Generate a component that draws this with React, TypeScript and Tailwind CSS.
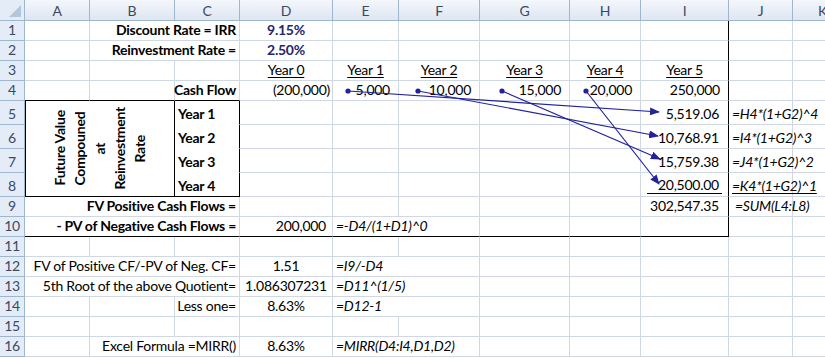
import type { ReactNode } from "react";

const cols = ["A", "B", "C", "D", "E", "F", "G", "H", "I", "J", "K"];

type Edge = "g" | "k" | "w";

const rightEdge: Record<Edge, string> = {
  g: "border-r-[#d0d7e5]",
  k: "border-r-black",
  w: "border-r-white",
};
const bottomEdge: Record<Edge, string> = {
  g: "border-b-[#d0d7e5]",
  k: "border-b-black",
  w: "border-b-white",
};

function Cell({
  r = "g",
  b = "g",
  className = "",
  children,
}: {
  r?: Edge;
  b?: Edge;
  className?: string;
  children?: ReactNode;
}) {
  return (
    <div
      className={`flex items-end whitespace-nowrap border-r border-b px-[3px] pb-[1px] leading-[18px] ${rightEdge[r]} ${bottomEdge[b]} ${className}`}
    >
      {children}
    </div>
  );
}

function RowNum({ n }: { n: number }) {
  return (
    <div className="flex items-end justify-center border-r border-b border-[#9eb6ce] bg-[#e4ecf7] pb-[1px] leading-[18px] text-[#3b4a63]">
      {n}
    </div>
  );
}

// run of empty cells; lastI puts the black right edge of column I on the last one
function Blank({ count, lastI = false }: { count: number; lastI?: boolean }) {
  return (
    <>
      {Array.from({ length: count }).map((_, i) => (
        <Cell key={i} r={lastI && i === count - 1 ? "k" : "g"} />
      ))}
    </>
  );
}

const num = "justify-end pr-[8px]";
const fv = "justify-end pr-[9px]";
const formula = "italic pl-[3px]";

function Arrows() {
  const lines = [
    { x1: 348, y1: 91, x2: 659, y2: 112 },
    { x1: 418, y1: 91, x2: 658, y2: 136 },
    { x1: 502, y1: 91, x2: 660, y2: 159 },
    { x1: 586, y1: 91, x2: 659, y2: 184 },
  ];
  return (
    <svg
      className="pointer-events-none absolute left-0 top-0"
      width={825}
      height={358}
      viewBox="0 0 825 358"
    >
      <defs>
        <marker
          id="head"
          markerWidth="10"
          markerHeight="8"
          refX="9"
          refY="4"
          orient="auto"
          markerUnits="userSpaceOnUse"
        >
          <path d="M0 0 L10 4 L0 8 Z" fill="#22229a" />
        </marker>
      </defs>
      {lines.map((l, i) => (
        <g key={i}>
          <line
            x1={l.x1}
            y1={l.y1}
            x2={l.x2}
            y2={l.y2}
            stroke="#22229a"
            strokeWidth="1.2"
            markerEnd="url(#head)"
          />
          <circle cx={l.x1} cy={l.y1} r="2.6" fill="#22229a" />
        </g>
      ))}
    </svg>
  );
}

export default function App() {
  return (
    <div className="relative h-[358px] w-[825px] overflow-hidden bg-white font-['Lato',sans-serif] text-[14px] tracking-[-0.25px] text-black">
      <div className="grid grid-cols-[25px_65px_85px_65px_93px_66px_81px_90px_71px_88px_64px_60px] grid-rows-[21px_20px_20px_20px_20px_24px_24px_24px_24px_20px_20px_20px_20px_20px_20px_20px_20px]">
        {/* header row */}
        <div className="relative border-r border-b border-[#9eb6ce] bg-[#e4ecf7]">
          <div className="absolute bottom-[3px] right-[3px] h-0 w-0 border-l-[12px] border-b-[12px] border-l-transparent border-b-[#b4c6dc]" />
        </div>
        {cols.map((c) => (
          <div
            key={c}
            className="flex items-center justify-center border-r border-b border-[#9eb6ce] bg-gradient-to-b from-[#f4f7fc] to-[#dde6f2] text-[#3b4a63]"
          >
            {c}
          </div>
        ))}

        {/* row 1 */}
        <RowNum n={1} />
        <Cell />
        <Cell className="col-span-2 justify-end font-bold">Discount Rate = IRR</Cell>
        <Cell className="justify-center font-bold text-[#25256f]">9.15%</Cell>
        <Blank count={5} lastI />
        <Blank count={2} />

        {/* row 2 */}
        <RowNum n={2} />
        <Cell />
        <Cell className="col-span-2 justify-end font-bold">Reinvestment Rate =</Cell>
        <Cell className="justify-center font-bold text-[#25256f]">2.50%</Cell>
        <Blank count={5} lastI />
        <Blank count={2} />

        {/* row 3 */}
        <RowNum n={3} />
        <Blank count={3} />
        {["Year 0", "Year 1", "Year 2", "Year 3", "Year 4", "Year 5"].map((y, i) => (
          <Cell key={y} r={i === 5 ? "k" : "g"} className="justify-center">
            <span className="underline underline-offset-2">{y}</span>
          </Cell>
        ))}
        <Blank count={2} />

        {/* row 4 */}
        <RowNum n={4} />
        <Cell b="k" />
        <Cell b="k" />
        <Cell b="k" className="justify-end font-bold">Cash Flow</Cell>
        <Cell className="justify-end pr-[2px]">(200,000)</Cell>
        <Cell className={num}>5,000</Cell>
        <Cell className={num}>10,000</Cell>
        <Cell className={num}>15,000</Cell>
        <Cell className={num}>20,000</Cell>
        <Cell r="k" className={num}>250,000</Cell>
        <Blank count={2} />

        {/* rows 5-8 */}
        <RowNum n={5} />
        <div className="col-span-2 row-span-4 flex items-center justify-center border-l border-r border-b border-black">
          <div className="rotate-180 text-center font-bold leading-[20px] [writing-mode:vertical-rl]">
            Future Value
            <br />
            Compouned
            <br />
            at
            <br />
            Reinvestment
            <br />
            Rate
          </div>
        </div>
        <Cell r="k" b="w" className="font-bold">Year 1</Cell>
        <Blank count={5} />
        <Cell r="k" className={fv}>5,519.06</Cell>
        <Cell className={formula}>=H4*(1+G2)^4</Cell>
        <Cell />

        <RowNum n={6} />
        <Cell r="k" b="w" className="font-bold">Year 2</Cell>
        <Blank count={5} />
        <Cell r="k" className={fv}>10,768.91</Cell>
        <Cell className={formula}>=I4*(1+G2)^3</Cell>
        <Cell />

        <RowNum n={7} />
        <Cell r="k" b="w" className="font-bold">Year 3</Cell>
        <Blank count={5} />
        <Cell r="k" className={fv}>15,759.38</Cell>
        <Cell className={formula}>=J4*(1+G2)^2</Cell>
        <Cell />

        <RowNum n={8} />
        <Cell r="k" b="k" className="font-bold">Year 4</Cell>
        <Blank count={5} />
        <Cell r="k" className="px-[6px] pb-[2px]">
          <div className="flex-1 border-b border-black pr-[3px] text-right leading-[17px]">
            20,500.00
          </div>
        </Cell>
        <Cell className={formula}>
          <span className="underline underline-offset-2">=K4*(1+G2)^1</span>
        </Cell>
        <Cell />

        {/* row 9 */}
        <RowNum n={9} />
        <Cell className="col-span-3 justify-end font-bold">FV Positive Cash Flows =</Cell>
        <Blank count={5} />
        <Cell r="k" className={fv}>302,547.35</Cell>
        <Cell className="italic pl-[6px]">=SUM(L4:L8)</Cell>
        <Cell />

        {/* row 10 */}
        <RowNum n={10} />
        <Cell b="k" className="col-span-3 justify-end font-bold">- PV of Negative Cash Flows =</Cell>
        <Cell b="k" className="justify-end pr-[6px]">200,000</Cell>
        <Cell b="k" className={`col-span-2 ${formula}`}>=-D4/(1+D1)^0</Cell>
        <Cell b="k" />
        <Cell b="k" />
        <Cell r="k" b="k" />
        <Blank count={2} />

        {/* row 11 */}
        <RowNum n={11} />
        <Blank count={11} />

        {/* row 12 */}
        <RowNum n={12} />
        <Cell className="col-span-3 justify-end">FV of Positive CF/-PV of Neg. CF=</Cell>
        <Cell className="justify-center">1.51</Cell>
        <Cell className={`col-span-2 ${formula}`}>=I9/-D4</Cell>
        <Blank count={5} />

        {/* row 13 */}
        <RowNum n={13} />
        <Cell className="col-span-3 justify-end">5th Root of the above Quotient=</Cell>
        <Cell className="justify-center">1.086307231</Cell>
        <Cell className={`col-span-2 ${formula}`}>=D11^(1/5)</Cell>
        <Blank count={5} />

        {/* row 14 */}
        <RowNum n={14} />
        <Cell />
        <Cell />
        <Cell className="justify-end">Less one=</Cell>
        <Cell className="justify-center">8.63%</Cell>
        <Cell className={`col-span-2 ${formula}`}>=D12-1</Cell>
        <Blank count={5} />

        {/* row 15 */}
        <RowNum n={15} />
        <Blank count={11} />

        {/* row 16 */}
        <RowNum n={16} />
        <Cell />
        <Cell className="col-span-2 justify-end">Excel Formula =MIRR()</Cell>
        <Cell className="justify-center">8.63%</Cell>
        <Cell className={`col-span-2 ${formula}`}>=MIRR(D4:I4,D1,D2)</Cell>
        <Blank count={5} />
      </div>
      <Arrows />
    </div>
  );
}
